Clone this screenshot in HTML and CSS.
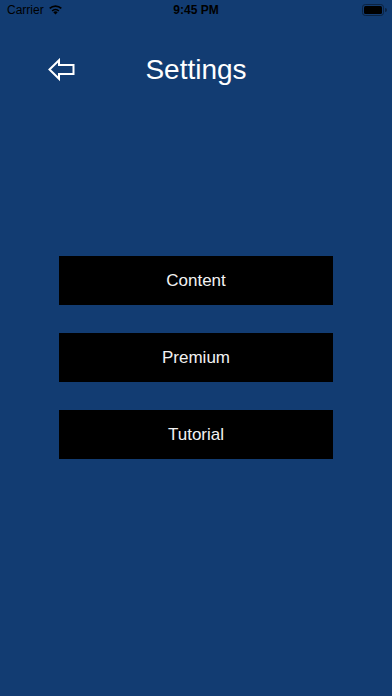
FILE: index.html
```html
<!DOCTYPE html>
<html>
<head>
<meta charset="utf-8">
<link rel="stylesheet" href="styles.css">
</head>
<body>
<div class="screen">
  <div class="status">
    <div class="status-left">
      <span class="carrier">Carrier</span>
      <svg class="wifi" width="15" height="11" viewBox="0 0 15 11">
        <path d="M7.5 10.6 L5.3 8.2 A3.2 3.2 0 0 1 9.7 8.2 Z" fill="#000"/>
        <path d="M3.6 6.4 A5.6 5.6 0 0 1 11.4 6.4 L10.3 7.6 A4 4 0 0 0 4.7 7.6 Z" fill="#000"/>
        <path d="M1.1 3.8 A9.2 9.2 0 0 1 13.9 3.8 L12.7 5.0 A7.5 7.5 0 0 0 2.3 5.0 Z" fill="#000"/>
      </svg>
    </div>
    <div class="time">9:45 PM</div>
    <div class="status-right">
      <svg class="battery" width="25" height="12" viewBox="0 0 25 12">
        <rect x="0.5" y="0.5" width="21" height="11" rx="2.8" fill="none" stroke="#0c2341" stroke-width="1"/>
        <rect x="2" y="2" width="18" height="8" rx="1.5" fill="#000"/>
        <path d="M23 4 A1.6 1.6 0 0 1 23 8 Z" fill="#0c2341"/>
      </svg>
    </div>
  </div>

  <div class="header">
    <div class="back">
      <svg width="28" height="24" viewBox="0 0 28 24">
        <path d="M1.5 11.5 L11 2.2 L11 7 L25.5 7 L25.5 16 L11 16 L11 20.8 Z" fill="none" stroke="#fff" stroke-width="2" stroke-linejoin="miter"/>
      </svg>
    </div>
    <h1 class="title">Settings</h1>
    <div class="spacer"></div>
  </div>

  <div class="menu">
    <div class="btn">Content</div>
    <div class="btn">Premium</div>
    <div class="btn">Tutorial</div>
  </div>
</div>
</body>
</html>
```
FILE: styles.css
```css
html, body {
  margin: 0;
  padding: 0;
}
body {
  background: #123c72;
  font-family: "Liberation Sans", Arial, sans-serif;
}
.screen {
  width: 392px;
  height: 696px;
  background: #123c72;
  overflow: hidden;
}
.status {
  height: 20px;
  display: grid;
  grid-template-columns: 1fr auto 1fr;
  align-items: center;
  color: #000;
  font-size: 12px;
}
.status-left {
  display: flex;
  align-items: center;
  padding-left: 7px;
  gap: 4px;
}
.carrier {
  letter-spacing: 0;
}
.wifi {
  display: block;
  margin-top: -1px;
}
.time {
  font-weight: bold;
}
.status-right {
  display: flex;
  justify-content: flex-end;
  padding-right: 5px;
}
.battery {
  display: block;
}
.header {
  margin-top: 24px;
  height: 52px;
  display: grid;
  grid-template-columns: 1fr auto 1fr;
  align-items: center;
}
.back {
  padding-left: 48px;
  display: flex;
  align-items: center;
}
.back svg {
  display: block;
  margin-top: -1px;
}
.title {
  margin: 0;
  color: #fff;
  font-size: 28px;
  font-weight: normal;
  line-height: 34px;
}
.menu {
  margin-top: 160px;
  display: flex;
  flex-direction: column;
  align-items: center;
  gap: 28px;
}
.btn {
  width: 274px;
  height: 49px;
  background: #000;
  color: #f2f2f2;
  font-size: 17px;
  display: flex;
  align-items: center;
  justify-content: center;
}
```
